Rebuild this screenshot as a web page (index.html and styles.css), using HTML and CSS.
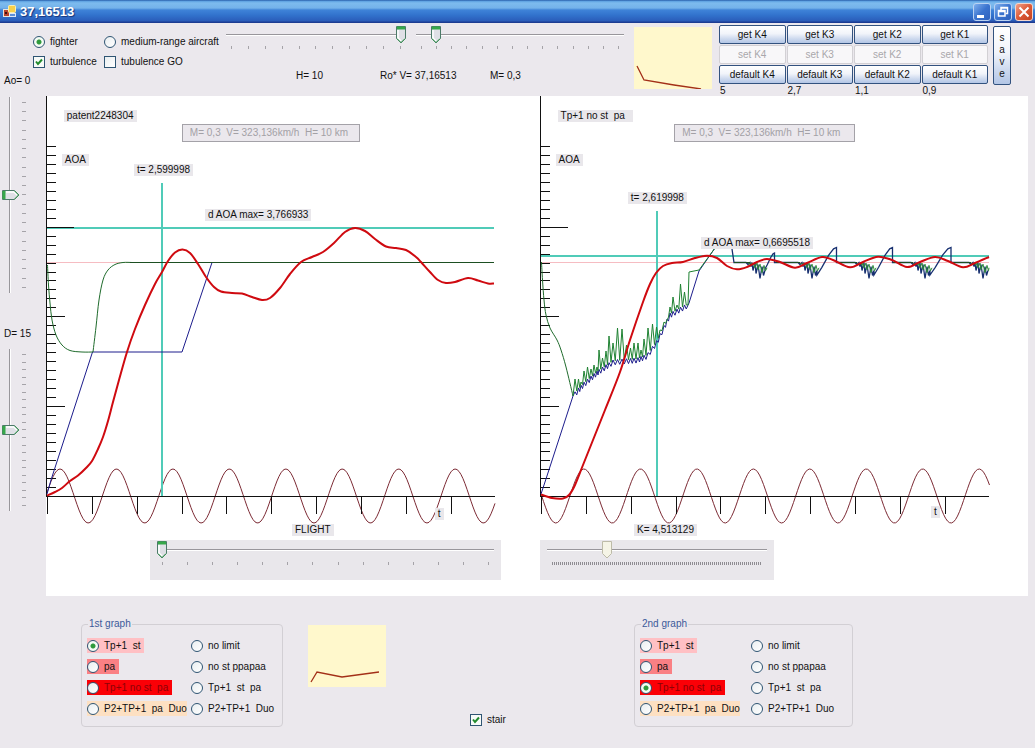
FILE: index.html
```html
<!DOCTYPE html>
<html lang="en">
<head>
<meta charset="utf-8">
<title>37,16513</title>
<link rel="stylesheet" href="styles.css">
</head>
<body>
<header class="titlebar">
  <svg class="app-icon" width="13" height="13" viewBox="0 0 13 13" aria-hidden="true">
    <rect x="0.5" y="4.5" width="6" height="7" fill="#b8412c" stroke="#e8e4da"/>
    <rect x="5.5" y="0.5" width="7" height="7" rx="1" fill="#f7d04a" stroke="#fbeeb0"/>
    <rect x="6.5" y="8.5" width="6" height="3" fill="#5d8fd8" stroke="#dfe8f6"/>
    <rect x="2" y="7" width="2" height="2" fill="#401010"/>
  </svg>
  <h1 class="title">37,16513</h1>
  <div class="window-buttons">
    <button class="winbtn" type="button" aria-label="Minimize"><svg width="16" height="16" viewBox="0 0 16 16"><path d="M3 12.500H10" stroke="#fff" stroke-width="3"/></svg></button>
    <button class="winbtn" type="button" aria-label="Restore"><svg width="16" height="16" viewBox="0 0 16 16"><path d="M6 6V3.500H12.500V9.500H10.500M6 4H12.500" fill="none" stroke="#fff" stroke-width="1.500"/><path d="M3.500 6.500H10V12H3.500ZM3.500 7.500H10" fill="none" stroke="#fff" stroke-width="1.500"/></svg></button>
    <button class="winbtn winbtn-close" type="button" aria-label="Close"><svg width="16" height="16" viewBox="0 0 16 16"><path d="M3.500 3.500L12.500 12.500M12.500 3.500L3.500 12.500" stroke="#fff" stroke-width="2"/></svg></button>
  </div>
</header>

<section class="toolbar">
  <div class="options">
    <label class="opt"><input type="radio" name="craft" checked>fighter</label>
    <label class="opt"><input type="radio" name="craft">medium-range aircraft</label>
    <label class="opt"><input type="checkbox" checked>turbulence</label>
    <label class="opt"><input type="checkbox">tubulence GO</label>
    <span class="ao">Ao= 0</span>
  </div>
  <div class="flight-params">
    <div class="params-sliders">
      <div class="track ticks-10"><input type="range" min="0" max="10" value="10" aria-label="H"></div>
      <div class="track ticks-13"><input type="range" min="0" max="13" value="1" aria-label="M"></div>
    </div>
    <div class="params-values"><span>H= 10</span><span>Ro* V= 37,16513</span><span>M= 0,3</span></div>
  </div>
  <svg class="mini" viewBox="0 0 78 62" role="img" aria-label="K curve"><path d="M3 39L10 53L40 58L67 62" fill="none" stroke="#a33018" stroke-width="1.300"/></svg>
  <div class="k-grid">
    <button class="btn" type="button">get K4</button><button class="btn" type="button">get K3</button><button class="btn" type="button">get K2</button><button class="btn" type="button">get K1</button>
    <button class="btn" type="button" disabled>set K4</button><button class="btn" type="button" disabled>set K3</button><button class="btn" type="button" disabled>set K2</button><button class="btn" type="button" disabled>set K1</button>
    <button class="btn" type="button">default K4</button><button class="btn" type="button">default K3</button><button class="btn" type="button">default K2</button><button class="btn" type="button">default K1</button>
    <span class="k-value">5</span><span class="k-value">2,7</span><span class="k-value">1,1</span><span class="k-value">0,9</span>
  </div>
  <button class="btn save" type="button"><span>s</span><span>a</span><span>v</span><span>e</span></button>
</section>

<main class="workspace">
  <aside class="side">
    <div class="vtrack vtrack-ao"><input type="range" min="0" max="20" value="10" aria-label="Ao"></div>
    <span class="side-label">D= 15</span>
    <div class="vtrack vtrack-d"><input type="range" min="0" max="20" value="10" aria-label="D"></div>
  </aside>
  <div class="canvas">
    <section class="graph">
      <div class="plot">
        <svg class="plot-svg" id="plot1" viewBox="46 96 494 428" role="img" aria-label="First graph"></svg>
        <span class="tag tag-name">patent2248304</span>
        <input class="info info-1" type="text" value="M= 0,3  V= 323,136km/h  H= 10 km" aria-label="Conditions" disabled>
        <span class="tag tag-aoa">AOA</span>
        <span class="tag tag-t1">t= 2,599998</span>
        <span class="tag tag-max1">d AOA max= 3,766933</span>
        <span class="tag tag-axis1">t</span>
      </div>
      <div class="caption caption-1"><label class="tag" for="flight">FLIGHT</label></div>
      <div class="panel panel-1"><div class="track ticks-13"><input id="flight" type="range" min="0" max="13" value="0"></div></div>
    </section>
    <section class="graph">
      <div class="plot">
        <svg class="plot-svg" id="plot2" viewBox="540 96 488 428" role="img" aria-label="Second graph"></svg>
        <span class="tag tag-name tag-wide">Tp+1 no st  pa</span>
        <input class="info info-2" type="text" value="M= 0,3  V= 323,136km/h  H= 10 km" aria-label="Conditions" disabled>
        <span class="tag tag-aoa">AOA</span>
        <span class="tag tag-t2">t= 2,619998</span>
        <span class="tag tag-max2">d AOA max= 0,6695518</span>
        <span class="tag tag-axis2">t</span>
      </div>
      <div class="caption caption-2"><label class="tag" for="kk">K= 4,513129</label></div>
      <div class="panel panel-2"><div class="track ticks-dense"><input id="kk" type="range" min="0" max="100" value="26" disabled></div></div>
    </section>
  </div>
</main>

<footer class="bottom">
  <div class="half">
    <fieldset class="group group-1">
      <legend>1st graph</legend>
      <div class="choices">
        <label class="opt pink"><input type="radio" name="g1" checked>Tp+1  st</label>
        <label class="opt"><input type="radio" name="g1">no limit</label>
        <label class="opt salmon"><input type="radio" name="g1">pa</label>
        <label class="opt"><input type="radio" name="g1">no st ppapaa</label>
        <label class="opt red"><input type="radio" name="g1">Tp+1 no st  pa</label>
        <label class="opt"><input type="radio" name="g1">Tp+1  st  pa</label>
        <label class="opt peach"><input type="radio" name="g1">P2+TP+1  pa  Duo</label>
        <label class="opt"><input type="radio" name="g1">P2+TP+1  Duo</label>
      </div>
    </fieldset>
    <svg class="mini" viewBox="0 0 78 62" role="img" aria-label="Limit curve"><path d="M3 57L9 47L34 52L71 47" fill="none" stroke="#a33018" stroke-width="1.300"/></svg>
    <label class="opt stair"><input type="checkbox" checked>stair</label>
  </div>
  <div class="half half-2">
    <fieldset class="group group-2">
      <legend>2nd graph</legend>
      <div class="choices">
        <label class="opt pink"><input type="radio" name="g2">Tp+1  st</label>
        <label class="opt"><input type="radio" name="g2">no limit</label>
        <label class="opt salmon"><input type="radio" name="g2">pa</label>
        <label class="opt"><input type="radio" name="g2">no st ppapaa</label>
        <label class="opt red"><input type="radio" name="g2" checked>Tp+1 no st  pa</label>
        <label class="opt"><input type="radio" name="g2">Tp+1  st  pa</label>
        <label class="opt peach"><input type="radio" name="g2">P2+TP+1  pa  Duo</label>
        <label class="opt"><input type="radio" name="g2">P2+TP+1  Duo</label>
      </div>
    </fieldset>
  </div>
</footer>
<script src="script.js"></script>
</body>
</html>
```
FILE: styles.css
```css
* { box-sizing: border-box; }

body {
  margin: 0;
  background: #ebe8ed;
  color: #111;
  font: 10px/14px "Liberation Sans", Arial, sans-serif;
}

input, button { font: inherit; color: inherit; margin: 0; }

/* title bar */
.titlebar {
  display: flex;
  align-items: center;
  gap: 4px;
  height: 23px;
  padding: 0 2px 0 3px;
  background: linear-gradient(#1d4e9c 0, #5a9fe0 1px, #7dbbee 3px, #74b2ea 8px, #3f83d8 10px, #3273cd 15px, #2a5cb9 21px, #1c3c92 22px, #1c3c92 23px);
}
.title {
  flex: 1;
  margin: 0;
  color: #fff;
  font-size: 13px;
  font-weight: bold;
  text-shadow: 1px 1px 1px #16357c;
}
.window-buttons { display: flex; gap: 3px; }
.winbtn {
  display: flex;
  width: 18px;
  height: 18px;
  padding: 0;
  border: 1px solid #b9d2f2;
  border-radius: 3px;
  background: linear-gradient(135deg, #7fb0ee, #3b74cf 50%, #2f62bd);
}
.winbtn-close { background: linear-gradient(135deg, #f0a088, #dc5a38 50%, #c4421f); border-color: #f4d6cc; }

/* toolbar */
.toolbar {
  display: flex;
  height: 73px;
  padding-right: 24px;
}
.options {
  display: grid;
  grid-template-columns: 71px auto;
  grid-template-rows: 20px 20px 14px;
  align-content: start;
  align-items: center;
  width: 226px;
  padding: 9px 0 0 33px;
}
.ao { margin: 4px 0 0 -29px; }

.opt {
  display: inline-flex;
  align-items: center;
  gap: 5px;
  height: 15px;
  white-space: pre;
}
.opt input {
  appearance: none;
  flex: none;
  width: 12px;
  height: 12px;
  border: 1px solid #2f5573;
  background: linear-gradient(135deg, #e9eef0, #fff);
}
.opt input[type="radio"] { border-radius: 50%; }
.opt input[type="radio"]:checked {
  background: radial-gradient(circle, #2f9a3c 0 2px, #f4fbf4 3px);
}
.opt input[type="checkbox"]:checked {
  background: #f8fbf8 url("data:image/svg+xml,%3Csvg xmlns='http://www.w3.org/2000/svg' viewBox='0 0 10 10'%3E%3Cpath d='M2 4.500L4 7L8 2.500' fill='none' stroke='%23218a2c' stroke-width='2'/%3E%3C/svg%3E");
}

.flight-params { flex: 1; margin-right: 10px; }
.params-sliders {
  display: grid;
  grid-template-columns: 180fr 208fr;
  column-gap: 10px;
  padding-top: 3px;
}
.params-values {
  display: grid;
  grid-template-columns: 84px 110px auto;
  margin-top: 20px;
  padding-left: 70px;
}

/* trackbars */
.track { position: relative; height: 23px; }
.track::after {
  content: "";
  display: block;
  height: 3px;
  margin: 2px 5px 0;
}
.ticks-10::after { background: repeating-linear-gradient(to right, #a5a3a8 0 1px, transparent 1px calc((100% - 1px) / 10)); }
.ticks-13::after { background: repeating-linear-gradient(to right, #a5a3a8 0 1px, transparent 1px calc((100% - 1px) / 13)); }
.ticks-dense::after { background: repeating-linear-gradient(to right, #8f8d92 0 1px, transparent 1px 2px); }

input[type="range"] {
  appearance: none;
  display: block;
  width: 100%;
  height: 18px;
  background: linear-gradient(#98969b, #98969b) 0 8px / 100% 1px no-repeat, linear-gradient(#fff, #fff) 0 9px / 100% 1px no-repeat;
}
input[type="range"]::-webkit-slider-thumb {
  appearance: none;
  width: 10px;
  height: 18px;
  background: url("data:image/svg+xml,%3Csvg xmlns='http://www.w3.org/2000/svg' viewBox='0 0 10 18'%3E%3Cpath d='M.5 .5H9.500V12.500L5 17L.5 12.500Z' fill='%23dfe0e6' stroke='%234c7a68'/%3E%3Cpath d='M1 2H9' stroke='%2336a84a' stroke-width='3'/%3E%3Cpath d='M2 4V12L5 15' fill='none' stroke='%23fff' stroke-width='1.500'/%3E%3Cpath d='M1 12.500L5 16.500L9 12.500' fill='none' stroke='%2341a058'/%3E%3C/svg%3E");
}
input[type="range"]:disabled::-webkit-slider-thumb {
  background: url("data:image/svg+xml,%3Csvg xmlns='http://www.w3.org/2000/svg' viewBox='0 0 10 18'%3E%3Cpath d='M.5 .5H9.500V12.500L5 17L.5 12.500Z' fill='%23f5f4e6' stroke='%23bdbba8'/%3E%3C/svg%3E");
}

.mini { flex: none; width: 78px; height: 62px; background: #fff8cc; }
.toolbar .mini { margin: 4px 7px 0 0; }

/* K buttons */
.k-grid {
  display: grid;
  grid-template-columns: repeat(4, 1fr);
  grid-template-rows: 19px 19px 19px 13px;
  gap: 1px;
  width: 269px;
  padding-top: 2px;
}
.btn {
  padding: 0;
  border: 1px solid #32527f;
  border-radius: 2px;
  background: linear-gradient(#fff, #f1f4fa 45%, #cdd9ee 75%, #b3c6e6);
  line-height: 15px;
}
.btn:disabled { border-color: #d2d0d4; background: #f8f7f9; color: #a9a7ab; }
.k-value { padding-left: 1px; line-height: 11px; }
.save {
  display: flex;
  flex-direction: column;
  justify-content: center;
  align-items: center;
  width: 18px;
  height: 59px;
  margin: 3px 0 0 5px;
  line-height: 12px;
}

/* workspace */
.workspace { display: flex; margin-right: 7px; }
.side { flex: none; width: 46px; padding-top: 1px; }
.side-label { display: block; padding-left: 4px; margin: 34px 0 8px; }
.vtrack { display: flex; padding-left: 2px; gap: 2px; }
.vtrack-ao { height: 196px; }
.vtrack-d { height: 162px; }
.vtrack::after {
  content: "";
  width: 4px;
  margin: 5px 0;
  background: repeating-linear-gradient(#a5a3a8 0 1px, transparent 1px calc((100% - 1px) / 20));
}
.vtrack input[type="range"] {
  writing-mode: vertical-lr;
  width: 18px;
  height: 100%;
  background: linear-gradient(#98969b, #98969b) 7px 0 / 1px 100% no-repeat, linear-gradient(#fff, #fff) 8px 0 / 1px 100% no-repeat;
}
.vtrack input[type="range"]::-webkit-slider-thumb {
  width: 18px;
  height: 10px;
  background: url("data:image/svg+xml,%3Csvg xmlns='http://www.w3.org/2000/svg' viewBox='0 0 18 10'%3E%3Cpath d='M.5 .5H12.500L17 5L12.500 9.500H.5Z' fill='%23dfe0e6' stroke='%234c7a68'/%3E%3Cpath d='M2 1V9' stroke='%2336a84a' stroke-width='3'/%3E%3Cpath d='M4 2H12L15 5' fill='none' stroke='%23fff' stroke-width='1.500'/%3E%3Cpath d='M12.500 1L16.500 5L12.500 9' fill='none' stroke='%2341a058'/%3E%3C/svg%3E");
}

.canvas {
  flex: 1;
  display: grid;
  grid-template-columns: 494fr 488fr;
  padding-bottom: 16px;
  background: #fff;
}
.plot { position: relative; }
.plot-svg { display: block; width: 100%; }

.tag {
  padding: 0 3px;
  background: #e9e7eb;
  line-height: 12px;
  white-space: pre;
}
.plot .tag, .plot .info { position: absolute; }
.tag-name { left: 3.6%; top: 3.2%; }
.tag-wide { padding-right: 8px; }
.tag-aoa { left: 3.2%; top: 13.6%; }
.tag-t1 { left: 17.8%; top: 16%; }
.tag-max1 { left: 32.2%; top: 26.5%; }
.tag-axis1 { left: 78.7%; top: 96.2%; }
.tag-t2 { left: 18%; top: 22.5%; }
.tag-max2 { left: 33%; top: 33%; }
.tag-axis2 { left: 80.1%; top: 95.8%; }
.info {
  top: 6.5%;
  width: 36%;
  height: 18px;
  padding: 0 7px;
  border: 1px solid #a4a2a8;
  background: #ebe8ed;
  color: #a3a1a6;
}
.info-1 { left: 27.5%; }
.info-2 { left: 27.5%; width: 37%; }

.caption { height: 16px; line-height: 12px; }
.caption .tag { display: inline-block; }
.caption-1 { padding-left: 246px; }
.caption-2 { padding-left: 94px; }
.panel { height: 40px; background: #e9e7eb; }
.panel .track::after { margin-top: 3px; }
.panel-1 { width: 71%; margin-left: 104px; padding: 1px 7px 0 7px; }
.panel-2 { width: 48%; padding: 1px 7px 0 7px; }

/* bottom row */
.bottom {
  display: grid;
  grid-template-columns: 540fr 495fr;
  padding: 21px 0;
}
.half { display: flex; align-items: flex-start; padding-left: 81px; }
.half-2 { padding-left: 94px; }
.half .mini { margin: 8px 84px 0 25px; }
.stair { align-self: flex-end; }
.group {
  margin: 0;
  min-width: 0;
  padding: 0 5px 10px;
  border: 1px solid #d2cfd4;
  border-radius: 4px;
}
.group-1 { width: 202px; }
.group-2 { width: 219px; }
.group legend { margin-left: 1px; padding: 0 1px; color: #3b5a9a; }
.choices {
  display: grid;
  grid-template-columns: 104px auto;
  row-gap: 6px;
  justify-items: start;
  padding-top: 7px;
}
.group-2 .choices { grid-template-columns: 111px auto; }
.pink, .salmon, .red, .peach { padding-right: 4px; }
.pink { background: #ffc0c4; }
.salmon { background: #fa8084; }
.red { background: #fb0006; color: #8d0206; }
.peach { margin-right: 4px; padding-right: 0; background: #fde0c2; }
```
FILE: script.js
```js
const NS = "http://www.w3.org/2000/svg";

function add(svg, d, stroke, width, crisp) {
  const p = document.createElementNS(NS, "path");
  p.setAttribute("d", d);
  p.setAttribute("fill", "none");
  p.setAttribute("stroke", stroke);
  p.setAttribute("stroke-width", width);
  if (crisp) p.setAttribute("shape-rendering", "crispEdges");
  svg.appendChild(p);
}

const line = pts => "M" + pts.map(p => p.join(" ")).join("L");

// Catmull-Rom spline through the points
function smooth(pts) {
  let d = "M" + pts[0].join(" ");
  for (let i = 0; i < pts.length - 1; i++) {
    const a = pts[i - 1] || pts[i], b = pts[i], c = pts[i + 1], e = pts[i + 2] || c;
    d += `C${b[0] + (c[0] - a[0]) / 6} ${b[1] + (c[1] - a[1]) / 6} ${c[0] - (e[0] - b[0]) / 6} ${c[1] - (e[1] - b[1]) / 6} ${c[0]} ${c[1]}`;
  }
  return d;
}

function axes(svg, x0) {
  let d = `M${x0} 96V496.500M${x0} 496.500H${x0 + 448}`;
  for (let i = 1; i <= 39; i++) {
    const len = i === 30 ? 27 : i % 10 === 0 && i < 30 ? 18 : 9;
    d += `M${x0} ${496.5 - i * 8.98}h${len}`;
  }
  for (let i = 0; i < 10; i++) d += `M${x0 + 1 + i * 44.85} 496v18`;
  add(svg, d, "#111", 1, true);
}

function wave(svg, x0, peak) {
  const pts = [];
  for (let x = x0; x <= x0 + 448; x += 2) {
    pts.push([x, 496 - 27 * Math.cos((x - peak) / 56.45 * 2 * Math.PI)]);
  }
  add(svg, line(pts), "#7c2a34", 1);
}

const CYAN = "#50cbb8", RED = "#cf0a10", GREEN = "#1f6b2c", BLUE = "#1c1c8c";

// first graph
const p1 = document.getElementById("plot1");
add(p1, "M47 262.500H130", "#f6bcc2", 1, true);
wave(p1, 47, 60);
add(p1, "M47 228H494M162 183V496", CYAN, 2, true);
axes(p1, 46.5);
add(p1, line([[47, 494], [51, 480], [92.5, 352], [182, 352], [212, 262.5]]), BLUE, 1);
add(p1, smooth([[47.5, 265], [48.5, 285], [50, 303], [52, 320], [56, 335], [62, 345], [70, 350.5], [82, 352], [93, 352]]), GREEN, 1);
add(p1, smooth([[93, 352], [96, 327], [99, 300], [103, 280], [108, 270], [115, 264.5], [123, 262.5], [132, 262.5]]), GREEN, 1);
add(p1, "M130 262.500H494", "#1d4f22", 1, true);
add(p1, smooth([
  [47, 495.5], [55, 492], [62, 488], [70, 481], [78, 475.5], [86, 468], [92, 461], [98, 449], [103, 437], [108, 421],
  [113, 402], [119, 380], [127, 352], [135, 329], [145, 305], [155, 284], [162, 272], [168, 261], [175, 252.5],
  [182.5, 249.5], [190, 253], [198, 264], [206, 277], [214, 287], [221, 291.5], [232, 293], [242, 293.5], [252, 297],
  [262, 300], [270, 298], [280, 288], [290, 274], [301, 262], [312, 257], [323, 252], [334, 243], [345, 232],
  [355, 228], [365, 231], [375, 239], [386, 246.5], [396, 248], [406, 250], [416, 257], [421, 262], [430, 272],
  [438, 280], [446, 283], [455, 282], [468, 278], [478, 280.5], [488, 283.5], [494, 283.5]]), RED, 2);

// second graph
const p2 = document.getElementById("plot2");
add(p2, "M541 262.500H989", "#f6bcc2", 1, true);
wave(p2, 541.5, 584);
add(p2, "M541 256H989M657 211V496", CYAN, 2, true);
axes(p2, 540.5);

const base = [[573, 396], [583, 385], [598, 372], [613, 362], [623, 361], [637, 360], [647, 356], [657, 342], [670, 315], [688, 305]];
function baseAt(x) {
  for (let i = 1; i < base.length; i++) {
    const [ax, ay] = base[i - 1], [bx, by] = base[i];
    if (x <= bx) return ay + (by - ay) * (x - ax) / (bx - ax);
  }
  return 305;
}
const spikes = [
  [575, 379], [578.5, 379], [581, 382], [584, 371], [587.5, 367], [591, 369], [594, 365], [597, 367], [599, 350],
  [602.5, 358], [606, 351], [609, 336], [613, 343], [617.5, 328], [622, 329], [626.5, 345], [630.5, 348], [634, 343],
  [638, 343], [641, 350], [644, 339], [648, 328], [652.5, 324], [656.5, 327], [660, 330], [664, 322], [667, 320],
  [670, 307], [673, 297], [677, 305], [680.5, 284], [684.5, 292]];
const greenNoise = [[573, 396]], blueNoise = [[573, 396]];
spikes.forEach(([x, y], i) => {
  const next = spikes[i + 1] ? spikes[i + 1][0] : 688;
  const mid = (x + next) / 2;
  greenNoise.push([x, y], [mid, baseAt(mid) - 1]);
  blueNoise.push([x, baseAt(x) - 2], [mid, baseAt(mid) + 3]);
});
add(p2, smooth([[541.5, 262], [542.5, 280], [544, 300], [546, 315], [550, 328], [557, 340], [561, 350], [566, 367], [573, 396]]), GREEN, 1);
add(p2, line([[541, 494], [545, 482], [573, 396], ...blueNoise.slice(1), [689, 303], [699, 271], [715, 248]]), BLUE, 1);
add(p2, line([...greenNoise, [688, 305], [689, 272], [699, 270], [715, 248]]), "#1f8232", 1);

// limiter bursts: [start x, crest x, crest y]; the last one is cut off by the plot's end
const shape = [[-4, 0], [-2, 2], [0, 0], [1, 4], [2, 0], [3, 8], [5, 0], [6, 11], [8, 2], [10, 16], [12, 4], [13.5, 13], [15, 8]];
const bursts = [[750, 774.5, 253], [802, 836.5, 247.5], [859, 892.5, 247.5], [915, 951, 247.5], [973, 0, 0]];
const flat = [[732, 249], [734, 262.5]];
bursts.forEach(([x, crest, top]) => {
  flat.push(...shape.map(([dx, dy]) => [x + dx, 262.5 + dy]));
  if (crest) {
    const startY = crest < 780 ? 269 : 275;
    const w = crest - x - 15, h = startY - top;
    flat.push([x + 15, startY], [x + 15 + w * 0.25, startY - h * 0.28], [x + 15 + w * 0.6, startY - h * 0.72],
      [x + 15 + w * 0.85, startY - h * 0.95], [crest, top], [crest, 262.5]);
  }
});
add(p2, line(flat), "#173070", 1.3);
bursts.forEach(([x]) => {
  add(p2, line(shape.map(([dx, dy]) => [Math.min(x + dx + 2, 989), 263 + dy * 0.6])), "#2f8a3c", 1);
});
add(p2, "M734 262.500H750M776 262.500H800M837 262.500H857M893 262.500H913M951 262.500H971", "#1d4f22", 1, true);
add(p2, smooth([
  [541, 494.5], [552, 498], [563, 498.5], [569, 495], [575, 485], [583, 465], [593, 440], [605, 410], [620, 372],
  [630, 340], [643, 302], [650, 284], [656, 273], [663, 266], [672, 263], [683, 262], [695, 258], [707, 255.7],
  [717, 258], [727, 266], [737, 269.3], [747, 267], [757, 262], [767, 259], [780, 262], [795, 267.7], [807, 263],
  [822, 257], [833, 260], [850, 267.3], [863, 262], [878, 256.7], [892, 260], [907, 267], [920, 262], [935, 257],
  [948, 261], [963, 267.3], [975, 263], [989, 257]]), RED, 2);
```
